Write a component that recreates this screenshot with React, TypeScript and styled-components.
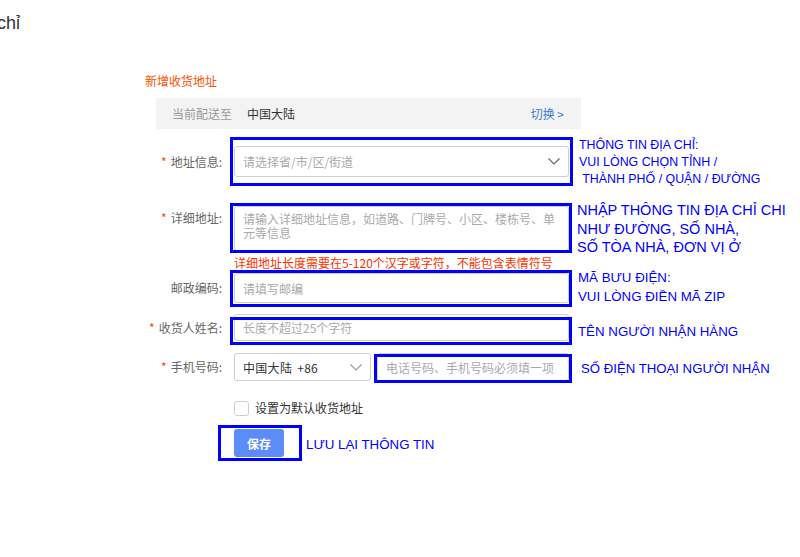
import styled, { createGlobalStyle } from 'styled-components';

const GlobalStyle = createGlobalStyle`
	body {
		margin: 0;
		background: #fff;
		font-family: "Noto Sans CJK SC", "Liberation Sans", sans-serif;
	}
	* {
		box-sizing: border-box;
	}
`;

const Page = styled.div`
	width: 800px;
	height: 557px;
	overflow: hidden;
`;

const Crumb = styled.div`
	padding-top: 12px;
	margin-left: -3px;
	font-family: "Liberation Sans", sans-serif;
	font-size: 18px;
	line-height: 22px;
	color: #333;
`;

const Form = styled.div`
	margin-left: 145px;
	padding-top: 38px;
	font-size: 12px;
`;

const Title = styled.div`
	line-height: 18px;
	color: #ff5000;
`;

const ShipBar = styled.div`
	margin: 8px 0 0 11px;
	width: 425px;
	height: 31px;
	padding: 0 17px 0 16px;
	background: #f3f3f3;
	display: flex;
	align-items: center;
	line-height: 31px;
`;

const ShipLabel = styled.span`
	color: #999;
	margin-right: 15px;
`;

const ShipValue = styled.span`
	color: #333;
	flex: 1;
`;

const SwitchLink = styled.span`
	color: #3a7bd5;
`;

const Row = styled.div<{ $mt: number }>`
	display: flex;
	align-items: flex-start;
	margin-top: ${(p) => p.$mt}px;
`;

const Label = styled.div<{ $h: number }>`
	width: 77px;
	margin-right: 12px;
	flex-shrink: 0;
	text-align: right;
	line-height: ${(p) => p.$h}px;
	color: #666;
	white-space: nowrap;
`;

const Required = styled.span`
	color: #ff4400;
	margin-right: 4px;
`;

const Indent = styled.div<{ $mt: number }>`
	padding-left: 89px;
	margin-top: ${(p) => p.$mt}px;
`;

const Marked = styled.div`
	position: relative;
	flex-shrink: 0;
`;

const Frame = styled.span<{ $t: number; $r: number; $b: number; $l: number }>`
	position: absolute;
	top: ${(p) => p.$t}px;
	right: ${(p) => p.$r}px;
	bottom: ${(p) => p.$b}px;
	left: ${(p) => p.$l}px;
	border: 3px solid #0000ff;
	pointer-events: none;
`;

const Note = styled.div<{ $x: number; $y: number; $size: number; $lh: number }>`
	position: absolute;
	left: calc(100% + ${(p) => p.$x}px);
	top: ${(p) => p.$y}px;
	white-space: pre;
	font-family: "Liberation Sans", Arial, sans-serif;
	font-size: ${(p) => p.$size}px;
	line-height: ${(p) => p.$lh}px;
	color: #0000ff;
`;

const SelectBox = styled.div<{ $w: number; $h: number }>`
	width: ${(p) => p.$w}px;
	height: ${(p) => p.$h}px;
	border: 1px solid #cfcfcf;
	border-radius: 3px;
	padding: 0 8px;
	display: flex;
	align-items: center;
	justify-content: space-between;
	background: #fff;
`;

const Placeholder = styled.span`
	color: #aaa;
`;

const ValueText = styled.span`
	color: #333;
	word-spacing: 2px;
	letter-spacing: 0.3px;
`;

const TextInput = styled.input<{ $w: number; $h: number }>`
	display: block;
	width: ${(p) => p.$w}px;
	height: ${(p) => p.$h}px;
	border: 1px solid #cfcfcf;
	border-radius: 3px;
	padding: 0 8px;
	margin: 0;
	font-family: inherit;
	font-size: 12px;
	color: #333;
	outline: none;
	&::placeholder {
		color: #aaa;
	}
`;

const TextArea = styled.textarea`
	display: block;
	width: 335px;
	height: 45px;
	border: 1px solid #cfcfcf;
	border-radius: 3px;
	padding: 5px 8px;
	margin: 0;
	font-family: inherit;
	font-size: 12px;
	line-height: 14px;
	resize: none;
	outline: none;
	overflow: hidden;
	&::placeholder {
		color: #aaa;
	}
`;

const ErrorText = styled.div`
	line-height: 16px;
	color: #ff3300;
	white-space: nowrap;
`;

const CheckRow = styled.label`
	display: flex;
	align-items: center;
	gap: 6px;
	line-height: 16px;
	color: #333;
`;

const Box = styled.span`
	width: 15px;
	height: 15px;
	border: 1px solid #cfcfcf;
	border-radius: 3px;
	background: #fff;
`;

const SaveButton = styled.button`
	display: block;
	width: 50px;
	height: 28px;
	border: 0;
	border-radius: 3px;
	background: #5b8cf9;
	color: #fff;
	font-family: inherit;
	font-size: 12px;
	font-weight: 700;
	padding: 0;
`;

function Chevron({ color }: { color: string }) {
	return (
		<svg width="12" height="7" viewBox="0 0 12 7">
			<polyline points="0.5,0.5 6,6 11.5,0.5" fill="none" stroke={color} strokeWidth="1.2" />
		</svg>
	);
}

export default function App() {
	return (
		<Page>
			<GlobalStyle />
			<Crumb>chỉ</Crumb>
			<Form>
				<Title>新增收货地址</Title>
				<ShipBar>
					<ShipLabel>当前配送至</ShipLabel>
					<ShipValue>中国大陆</ShipValue>
					<SwitchLink>切换 &gt;</SwitchLink>
				</ShipBar>

				<Row $mt={17}>
					<Label $h={31}>
						<Required>*</Required>地址信息:
					</Label>
					<Marked>
						<SelectBox $w={335} $h={31}>
							<Placeholder>请选择省/市/区/街道</Placeholder>
							<Chevron color="#666" />
						</SelectBox>
						<Frame $t={-9} $r={-4} $b={-9} $l={-4} />
						<Note $x={10} $y={-9} $size={12.4} $lh={17}>
							{'THÔNG TIN ĐỊA CHỈ:\nVUI LÒNG CHỌN TỈNH /\n THÀNH PHỐ / QUẬN / ĐƯỜNG'}
						</Note>
					</Marked>
				</Row>

				<Row $mt={29}>
					<Label $h={24}>
						<Required>*</Required>详细地址:
					</Label>
					<Marked>
						<TextArea placeholder="请输入详细地址信息，如道路、门牌号、小区、楼栋号、单元等信息" />
						<Frame $t={-3} $r={-3} $b={-2} $l={-4} />
						<Note $x={8} $y={-5} $size={14.5} $lh={18.5}>
							{'NHẬP THÔNG TIN ĐỊA CHỈ CHI\nNHƯ ĐƯỜNG, SỐ NHÀ,\nSỐ TÒA NHÀ, ĐƠN VỊ Ở'}
						</Note>
					</Marked>
				</Row>

				<Indent $mt={4}>
					<ErrorText>详细地址长度需要在5-120个汉字或字符，不能包含表情符号</ErrorText>
				</Indent>

				<Row $mt={2}>
					<Label $h={30}>邮政编码:</Label>
					<Marked>
						<TextInput $w={335} $h={30} placeholder="请填写邮编" />
						<Frame $t={-3} $r={-3} $b={-4} $l={-4} />
						<Note $x={9} $y={-5} $size={13.3} $lh={19}>
							{'MÃ BƯU ĐIỆN:\nVUI LÒNG ĐIỀN MÃ ZIP'}
						</Note>
					</Marked>
				</Row>

				<Row $mt={11}>
					<Label $h={27}>
						<Required>*</Required>收货人姓名:
					</Label>
					<Marked>
						<TextInput $w={335} $h={27} placeholder="长度不超过25个字符" />
						<Frame $t={3} $r={-3} $b={-4} $l={-4} />
						<Note $x={9} $y={7.5} $size={13.3} $lh={19}>
							TÊN NGƯỜI NHẬN HÀNG
						</Note>
					</Marked>
				</Row>

				<Row $mt={12}>
					<Label $h={28}>
						<Required>*</Required>手机号码:
					</Label>
					<SelectBox $w={137} $h={28}>
						<ValueText>中国大陆 +86</ValueText>
						<Chevron color="#999" />
					</SelectBox>
					<Marked style={{ marginLeft: 6 }}>
						<TextInput $w={192} $h={28} placeholder="电话号码、手机号码必须填一项" />
						<Frame $t={1} $r={-3} $b={-2} $l={-3} />
						<Note $x={12} $y={5.5} $size={13.2} $lh={19}>
							SỐ ĐIỆN THOẠI NGƯỜI NHẬN
						</Note>
					</Marked>
				</Row>

				<Indent $mt={19}>
					<CheckRow>
						<Box />
						设置为默认收货地址
					</CheckRow>
				</Indent>

				<Indent $mt={13}>
					<Marked style={{ width: 50 }}>
						<SaveButton>保存</SaveButton>
						<Frame $t={-4} $r={-18} $b={-4} $l={-16} />
						<Note $x={22} $y={5.5} $size={13.3} $lh={19}>
							LƯU LẠI THÔNG TIN
						</Note>
					</Marked>
				</Indent>
			</Form>
		</Page>
	);
}
